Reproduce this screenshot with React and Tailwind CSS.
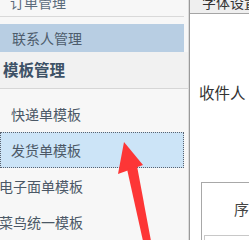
import React from 'react';

const font = { fontFamily: '"Noto Sans CJK SC", "Noto Sans", sans-serif' };

const NavItem = ({ label, selected, className }) => (
  <div
    className={
      'h-[36px] w-[184px] flex items-center whitespace-nowrap text-[14px] text-[#4b5866] ' +
      (selected ? 'bg-[#cce4f7] border border-dotted border-[#5a6370] ' : 'border border-transparent ') +
      (className || '')
    }
  >
    {label}
  </div>
);

const App = () => {
  return (
    <div className="relative w-[249px] h-[240px] overflow-hidden flex bg-white" style={font}>
      {/* left nav */}
      <div className="w-[188px] h-full bg-[#f7f7f7] flex flex-col shrink-0">
        <div className="-mt-[11px] h-[28px] w-[184px] flex items-center pl-[10px] text-[14px] text-[#5b6b7b] border-b border-[#d9d9d9]">
          订单管理
        </div>
        <div className="mt-[7px] h-[28px] w-[184px] flex items-center pl-[12px] text-[14px] text-[#4d5c6c] bg-[#b8cee3]">
          联系人管理
        </div>
        <div className="h-[37px] flex items-center pl-[3px] text-[15.5px] font-bold text-[#3d5166] bg-[#f1f1f1] border-b border-[#d6d6d6]">
          模板管理
        </div>
        <div className="pt-[7px] flex flex-col">
          <NavItem label="快递单模板" className="pl-[10px]" />
          <NavItem label="发货单模板" selected className="pl-[10px]" />
          <NavItem label="电子面单模板" className="-ml-[2px]" />
          <NavItem label="菜鸟统一模板" className="-ml-[2px]" />
        </div>
      </div>

      {/* divider */}
      <div className="w-[2px] h-full bg-[#dcdcdc] border-r border-[#9a9a9a] shrink-0" />

      {/* right panel */}
      <div className="flex-1 min-w-0 h-full flex flex-col">
        <div className="h-[14px] bg-[#efefef] border-b border-[#a5a5a5] flex items-end pl-[12px] overflow-hidden whitespace-nowrap">
          <span className="text-[14px] leading-[14px] text-[#333] -translate-y-[4px]">字体设置</span>
        </div>
        <div className="h-[86px] flex items-end pl-[9px] whitespace-nowrap">
          <span className="text-[15.5px] text-[#333] leading-none">收件人</span>
        </div>
        <div className="mt-[82px] ml-[11px] flex-1 border-l border-t border-[#a8a8a8] flex flex-col">
          <div className="h-[52px] flex items-center pl-[32px] text-[15px] text-[#444] whitespace-nowrap">序号</div>
          <div className="ml-[2px] flex-1 border-t border-l border-[#c8c8c8]" />
        </div>
      </div>

      {/* red arrow */}
      <svg className="absolute left-0 top-0 pointer-events-none" width="249" height="240" viewBox="0 0 249 240">
        <polygon points="124,142 118,174 143,165" fill="#fd3636" />
        <polygon points="127,169 143,241 151,241 137,166" fill="#fd3636" />
      </svg>
    </div>
  );
};

export default App;
